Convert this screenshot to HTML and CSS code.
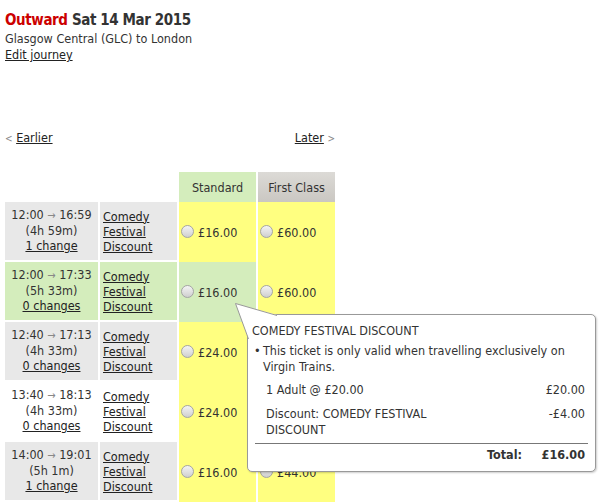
FILE: index.html
```html
<!DOCTYPE html>
<html lang="en">
<head>
  <meta charset="UTF-8" />
  <title>Outward journey</title>
  <link rel="stylesheet" href="styles.css">
</head>
<body>
  <div class="page">
    <h1 class="journey-title"><span class="direction">Outward</span> Sat 14 Mar 2015</h1>
    <p class="route">Glasgow Central (GLC) to London</p>
    <a class="edit-link" href="#">Edit journey</a>

    <div class="pager">
      <span><span class="chev">&lt;</span> <a href="#">Earlier</a></span>
      <span><a href="#">Later</a> <span class="chev">&gt;</span></span>
    </div>

    <table class="fares">
      <thead>
        <tr>
          <th class="col-time"></th>
          <th class="col-name"></th>
          <th class="col-price std-head">Standard</th>
          <th class="col-price first-head">First Class</th>
        </tr>
      </thead>
      <tbody>
        <tr class="odd">
          <td class="time">12:00 <span class="arrow">&rarr;</span> 16:59<br>(4h 59m)<br><a href="#">1 change</a></td>
          <td class="name"><a href="#">Comedy<br>Festival<br>Discount</a></td>
          <td class="price"><label><input type="radio" name="fare"> £16.00</label></td>
          <td class="price"><label><input type="radio" name="fare"> £60.00</label></td>
        </tr>
        <tr class="selected">
          <td class="time">12:00 <span class="arrow">&rarr;</span> 17:33<br>(5h 33m)<br><a href="#">0 changes</a></td>
          <td class="name"><a href="#">Comedy<br>Festival<br>Discount</a></td>
          <td class="price active"><label><input type="radio" name="fare"> £16.00</label></td>
          <td class="price"><label><input type="radio" name="fare"> £60.00</label></td>
        </tr>
        <tr class="odd">
          <td class="time">12:40 <span class="arrow">&rarr;</span> 17:13<br>(4h 33m)<br><a href="#">0 changes</a></td>
          <td class="name"><a href="#">Comedy<br>Festival<br>Discount</a></td>
          <td class="price"><label><input type="radio" name="fare"> £24.00</label></td>
          <td class="price"><label><input type="radio" name="fare"> £60.00</label></td>
        </tr>
        <tr class="even">
          <td class="time">13:40 <span class="arrow">&rarr;</span> 18:13<br>(4h 33m)<br><a href="#">0 changes</a></td>
          <td class="name"><a href="#">Comedy<br>Festival<br>Discount</a></td>
          <td class="price"><label><input type="radio" name="fare"> £24.00</label></td>
          <td class="price"><label><input type="radio" name="fare"> £60.00</label></td>
        </tr>
        <tr class="odd">
          <td class="time">14:00 <span class="arrow">&rarr;</span> 19:01<br>(5h 1m)<br><a href="#">1 change</a></td>
          <td class="name"><a href="#">Comedy<br>Festival<br>Discount</a></td>
          <td class="price"><label><input type="radio" name="fare"> £16.00</label></td>
          <td class="price"><label><input type="radio" name="fare"> £44.00</label></td>
        </tr>
      </tbody>
    </table>

    <div class="fare-tip">
      <svg class="tip-arrow" width="46" height="40" viewBox="0 0 46 40">
        <polygon points="1.5,1.5 43,13 43,16 16,16 16,37 14.5,37" fill="#fff" />
        <polyline points="43,13.5 1.5,1.5 14.5,37" fill="none" stroke="#999" stroke-width="1" />
      </svg>
      <h3>COMEDY FESTIVAL DISCOUNT</h3>
      <ul>
        <li>This ticket is only valid when travelling exclusively on Virgin Trains.</li>
      </ul>
      <table class="breakdown">
        <tr>
          <td>1 Adult @ £20.00</td>
          <td class="amount">£20.00</td>
        </tr>
        <tr class="discount">
          <td>Discount: COMEDY FESTIVAL DISCOUNT</td>
          <td class="amount">-£4.00</td>
        </tr>
        <tr class="total">
          <td>Total:</td>
          <td class="amount">£16.00</td>
        </tr>
      </table>
    </div>
  </div>
</body>
</html>
```

FILE: styles.css
```css
* {
  box-sizing: border-box;
  margin: 0;
  padding: 0;
}

body {
  font-family: "DejaVu Sans Condensed", "DejaVu Sans", sans-serif;
  font-size: 12.5px;
  color: #333;
  background: #fff;
}

a {
  color: #222;
  text-decoration: underline;
}

.page {
  position: relative;
  padding: 10px 5px 0;
  width: 340px;
}

.journey-title {
  font-size: 15px;
  line-height: 20px;
  font-weight: bold;
  letter-spacing: -0.4px;
  color: #333;
}

.direction {
  color: #cc0000;
}

.route {
  line-height: 17px;
}

.edit-link {
  display: inline-block;
  line-height: 16px;
}

.pager {
  display: flex;
  justify-content: space-between;
  width: 330px;
  margin-top: 67px;
  line-height: 16px;
}

.chev {
  color: #888;
  font-size: 10px;
}

.fares {
  border-collapse: separate;
  border-spacing: 2px 0;
  margin: 25px 0 0 -2px;
  table-layout: fixed;
  width: 334px;
}

.col-time {
  width: 93px;
}

.col-name {
  width: 77px;
}

.col-price {
  width: 77px;
}

.fares th {
  height: 30px;
  font-weight: normal;
  text-align: center;
  vertical-align: middle;
}

.std-head {
  background: #d4edbc;
}

.first-head {
  background: linear-gradient(#dcdad6, #cac7c2);
}

.fares td {
  height: 60px;
}

.time {
  text-align: center;
  vertical-align: top;
  padding-top: 5px;
  line-height: 15px;
  border-bottom: 2px solid #fff;
}

.arrow {
  color: #888;
  font-size: 11px;
}

.name {
  vertical-align: middle;
  padding-left: 3px;
  line-height: 15px;
  border-bottom: 2px solid #fff;
}

.odd .time,
.odd .name {
  background: #e8e8e8;
}

.selected .time,
.selected .name {
  background: #d4edbc;
}

.price {
  background: #ffff80;
  vertical-align: middle;
  padding-left: 2px;
}

.price.active {
  background: #d4edbc;
}

.price label {
  display: flex;
  align-items: center;
  gap: 4px;
}

.price input {
  appearance: none;
  width: 13px;
  height: 13px;
  border-radius: 50%;
  border: 1px solid #a4a4a4;
  background: linear-gradient(#f4f4f4, #cfcfcf);
  margin-top: -2px;
}

.fare-tip {
  position: absolute;
  left: 247px;
  top: 314px;
  width: 349px;
  height: 158px;
  background: #fff;
  border: 1px solid #999;
  border-radius: 5px;
  box-shadow: 1px 1px 2px rgba(0, 0, 0, 0.2);
  padding: 8px 8px 0 4px;
  line-height: 16px;
}

.tip-arrow {
  position: absolute;
  left: -14px;
  top: -13px;
}

.fare-tip h3 {
  font-size: 12.5px;
  font-weight: normal;
}

.fare-tip ul {
  list-style: none;
  margin: 4px 0 0 4px;
  padding-right: 20px;
}

.fare-tip li {
  position: relative;
  padding-left: 7px;
}

.fare-tip li::before {
  content: "\2022";
  position: absolute;
  left: -2px;
}

.breakdown {
  border-collapse: collapse;
  width: 333px;
  margin: -1px 0 0 3px;
}

.breakdown td {
  padding: 8px 3px 0 11px;
  vertical-align: top;
}

.breakdown .amount {
  width: 50px;
  padding-left: 0;
  text-align: right;
}

.breakdown .discount td {
  padding-bottom: 5px;
}

.breakdown .discount td:first-child {
  padding-right: 80px;
}

.breakdown .total td {
  border-top: 1px solid #777;
  font-weight: bold;
  padding-top: 3px;
}

.breakdown .total td:first-child {
  text-align: right;
  padding-right: 16px;
}
```
